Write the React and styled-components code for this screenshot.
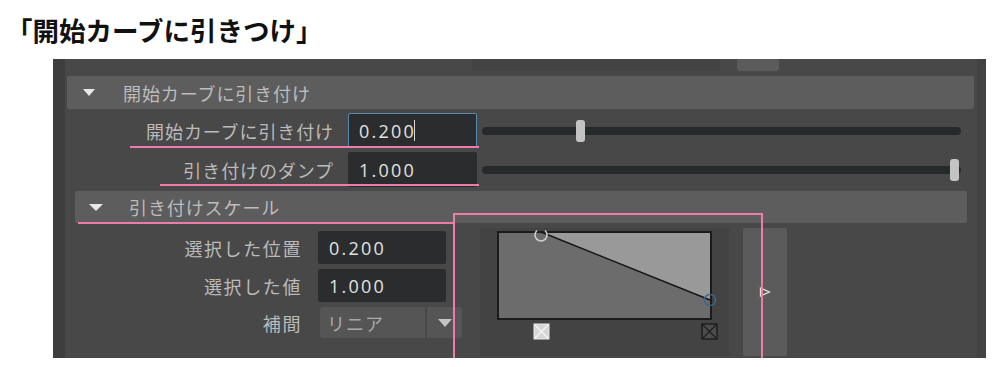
import React from "react";
import styled, { createGlobalStyle } from "styled-components";

const GlobalStyle = createGlobalStyle`
  body {
    margin: 0;
    background: #ffffff;
    font-family: "Noto Sans CJK JP", "Noto Sans", sans-serif;
  }
`;

const Title = styled.h1`
  margin: 0;
  height: 59px;
  box-sizing: border-box;
  padding: 16px 0 0 6px;
  font-size: 26.5px;
  line-height: 27px;
  font-weight: 700;
  color: #111;
`;

const Panel = styled.div`
  position: relative;
  margin-left: 53px;
  width: 933px;
  height: 299px;
  display: flex;
  background: #484848;
`;

const SideStrip = styled.div`
  width: 12px;
  background: #3e3e3e;
`;

const ScrollStrip = styled.div`
  width: 9px;
  background: #424242;
`;

const Main = styled.div`
  flex: 1;
  display: flex;
  flex-direction: column;
`;

const TopStrip = styled.div`
  height: 17px;
  display: flex;
  align-items: flex-start;
  padding-left: 407px;
  gap: 17px;
`;

const TopBlock = styled.div`
  width: ${(p) => p.$w}px;
  height: 12px;
  background: ${(p) => (p.$tab ? "#5b5b5b" : "#434343")};
  border-radius: ${(p) => (p.$tab ? "0 0 3px 3px" : "0")};
`;

const FrameHeader = styled.div`
  height: ${(p) => p.$h}px;
  margin: ${(p) => p.$margin};
  padding-left: ${(p) => p.$pad}px;
  background: #5d5d5d;
  border-radius: 2px;
  display: flex;
  align-items: center;
  gap: ${(p) => p.$gap}px;
  font-size: 18px;
  letter-spacing: 0.9px;
  color: #bcbcbc;
`;

const Arrow = styled.span`
  width: 0;
  height: 0;
  border-left: ${(p) => p.$w / 2}px solid transparent;
  border-right: ${(p) => p.$w / 2}px solid transparent;
  border-top: 7px solid #e8e8e8;
`;

const Rows = styled.div`
  display: flex;
  flex-direction: column;
  gap: ${(p) => p.$gap}px;
  padding-top: ${(p) => p.$top}px;
`;

const Row = styled.div`
  height: ${(p) => p.$h}px;
  display: flex;
  align-items: center;
`;

const Label = styled.span`
  width: ${(p) => p.$w}px;
  text-align: right;
  font-size: 18px;
  letter-spacing: ${(p) => p.$ls || 0.9}px;
  color: #bbbbbb;
  white-space: nowrap;
`;

const Field = styled.div`
  box-sizing: border-box;
  width: ${(p) => p.$w}px;
  height: 100%;
  margin-left: ${(p) => p.$ml}px;
  padding-left: 10px;
  display: flex;
  align-items: center;
  background: #2a2c2d;
  border: 1px solid ${(p) => (p.$focus ? "#5689ab" : "transparent")};
  border-radius: 2px;
  font-family: "Open Sans", sans-serif;
  font-size: 18px;
  letter-spacing: 2.2px;
  color: #e2e2e2;
`;

const Caret = styled.span`
  width: 1px;
  height: 21px;
  margin-left: -2px;
  background: #d8d8d8;
`;

const Slider = styled.div`
  position: relative;
  flex: 1;
  height: 22px;
  margin: 0 16px 0 5px;
  display: flex;
  align-items: center;
`;

const Track = styled.div`
  width: 100%;
  height: 8px;
  border-radius: 4px;
  background: #262a2b;
`;

const Thumb = styled.div`
  position: absolute;
  top: 0;
  width: 9px;
  height: 22px;
  border-radius: 3px;
  background: #c3c3c3;
`;

const ScaleBody = styled.div`
  display: flex;
  align-items: flex-start;
  padding-top: 5px;
`;

const Dropdown = styled.div`
  height: 100%;
  margin-left: 18px;
  display: flex;
  gap: 2px;
`;

const DropValue = styled.div`
  width: 105px;
  padding-left: 7px;
  box-sizing: border-box;
  display: flex;
  align-items: center;
  background: #555555;
  border-radius: 3px 0 0 3px;
  font-size: 18px;
  letter-spacing: 1px;
  color: #a9a9a9;
`;

const DropButton = styled.div`
  width: 35px;
  display: flex;
  align-items: center;
  justify-content: center;
  background: #555555;
  border-radius: 0 3px 3px 0;
`;

const DropArrow = styled.span`
  width: 0;
  height: 0;
  border-left: 7px solid transparent;
  border-right: 7px solid transparent;
  border-top: 8px solid #c4c4c4;
`;

const RampBox = styled.div`
  width: 249px;
  height: 128px;
  margin-left: 18px;
  background: #434343;
`;

const SideButton = styled.div`
  width: 44px;
  height: 128px;
  margin-left: 14px;
  border-radius: 2px;
  background: #5b5b5b;
  display: flex;
  align-items: center;
  justify-content: center;
`;

const Mark = styled.div`
  position: absolute;
  left: ${(p) => p.$x}px;
  top: ${(p) => p.$y}px;
  width: ${(p) => p.$w}px;
  height: ${(p) => (p.$h ? `${p.$h}px` : "2px")};
  box-sizing: border-box;
  background: ${(p) => (p.$h ? "transparent" : "#ec7cab")};
  border: ${(p) => (p.$h ? "2px solid #ec7cab" : "none")};
  pointer-events: none;
`;

const SliderRow = ({ value }) => (
  <Slider>
    <Track />
    <Thumb style={{ left: `calc(${value * 100}% - ${value * 11}px)` }} />
  </Slider>
);

const RampGraph = () => (
  <svg width="249" height="128" viewBox="0 0 249 128">
    <rect x="18" y="4" width="213" height="87" fill="#999999" />
    <polygon points="18,4 61,4 230,72 230,91 18,91" fill="#6b6c6b" />
    <line x1="61" y1="4" x2="230" y2="72" stroke="#151515" strokeWidth="1.4" />
    <rect x="18" y="4" width="213" height="87" fill="none" stroke="#1b1b1b" strokeWidth="2" />
    <path d="M57 2.5 A6 6 0 1 0 65 2.5" fill="none" stroke="#cfcfcf" strokeWidth="1.6" />
    <circle cx="230" cy="72" r="5.5" fill="none" stroke="#3b6590" strokeWidth="1.4" />
    <rect x="54" y="96" width="15" height="15" fill="#d6d6d6" stroke="#ececec" strokeWidth="1" />
    <path d="M55 97 L68 110 M68 97 L55 110" stroke="#f6f6f6" strokeWidth="1.2" />
    <rect x="222" y="96" width="15" height="15" fill="#4c4c4c" stroke="#1c1c1c" strokeWidth="1.4" />
    <path d="M223 97 L236 110 M236 97 L223 110" stroke="#1c1c1c" strokeWidth="1.2" />
  </svg>
);

const PlayIcon = () => (
  <svg width="12" height="10" viewBox="0 0 12 10">
    <path d="M1.5 1 L10.5 5 L1.5 9 Z" fill="none" stroke="#e8e0d0" strokeWidth="1.3" />
  </svg>
);

export default function App() {
  return (
    <>
      <GlobalStyle />
      <Title>「開始カーブに引きつけ」</Title>
      <Panel>
        <SideStrip />
        <Main>
          <TopStrip>
            <TopBlock $w={248} />
            <TopBlock $w={42} $tab />
          </TopStrip>
          <FrameHeader $h={33} $margin="0 3px 0 2px" $pad={16} $gap={28}>
            <Arrow $w={12} />
            開始カーブに引き付け
          </FrameHeader>
          <Rows $gap={4} $top={4}>
            <Row $h={35}>
              <Label $w={269}>開始カーブに引き付け</Label>
              <Field $w={129} $ml={14} $focus>
                0.200
                <Caret />
              </Field>
              <SliderRow value={0.2} />
            </Row>
            <Row $h={35}>
              <Label $w={269}>引き付けのダンプ</Label>
              <Field $w={129} $ml={14}>
                1.000
              </Field>
              <SliderRow value={1} />
            </Row>
          </Rows>
          <FrameHeader $h={32} $margin="4px 10px 0 10px" $pad={14} $gap={26}>
            <Arrow $w={14} />
            引き付けスケール
          </FrameHeader>
          <ScaleBody>
            <Rows $gap={5} $top={3}>
              <Row $h={33}>
                <Label $w={237} $ls={1.6}>選択した位置</Label>
                <Field $w={128} $ml={16}>
                  0.200
                </Field>
              </Row>
              <Row $h={33}>
                <Label $w={237} $ls={1.6}>選択した値</Label>
                <Field $w={128} $ml={16}>
                  1.000
                </Field>
              </Row>
              <Row $h={31}>
                <Label $w={237} $ls={1.6}>補間</Label>
                <Dropdown>
                  <DropValue>リニア</DropValue>
                  <DropButton>
                    <DropArrow />
                  </DropButton>
                </Dropdown>
              </Row>
            </Rows>
            <RampBox>
              <RampGraph />
            </RampBox>
            <SideButton>
              <PlayIcon />
            </SideButton>
          </ScaleBody>
        </Main>
        <ScrollStrip />
        <Mark $x={77} $y={87} $w={349} />
        <Mark $x={107} $y={125} $w={319} />
        <Mark $x={25} $y={163} $w={377} />
        <Mark $x={400} $y={154} $w={310} $h={152} />
      </Panel>
    </>
  );
}
